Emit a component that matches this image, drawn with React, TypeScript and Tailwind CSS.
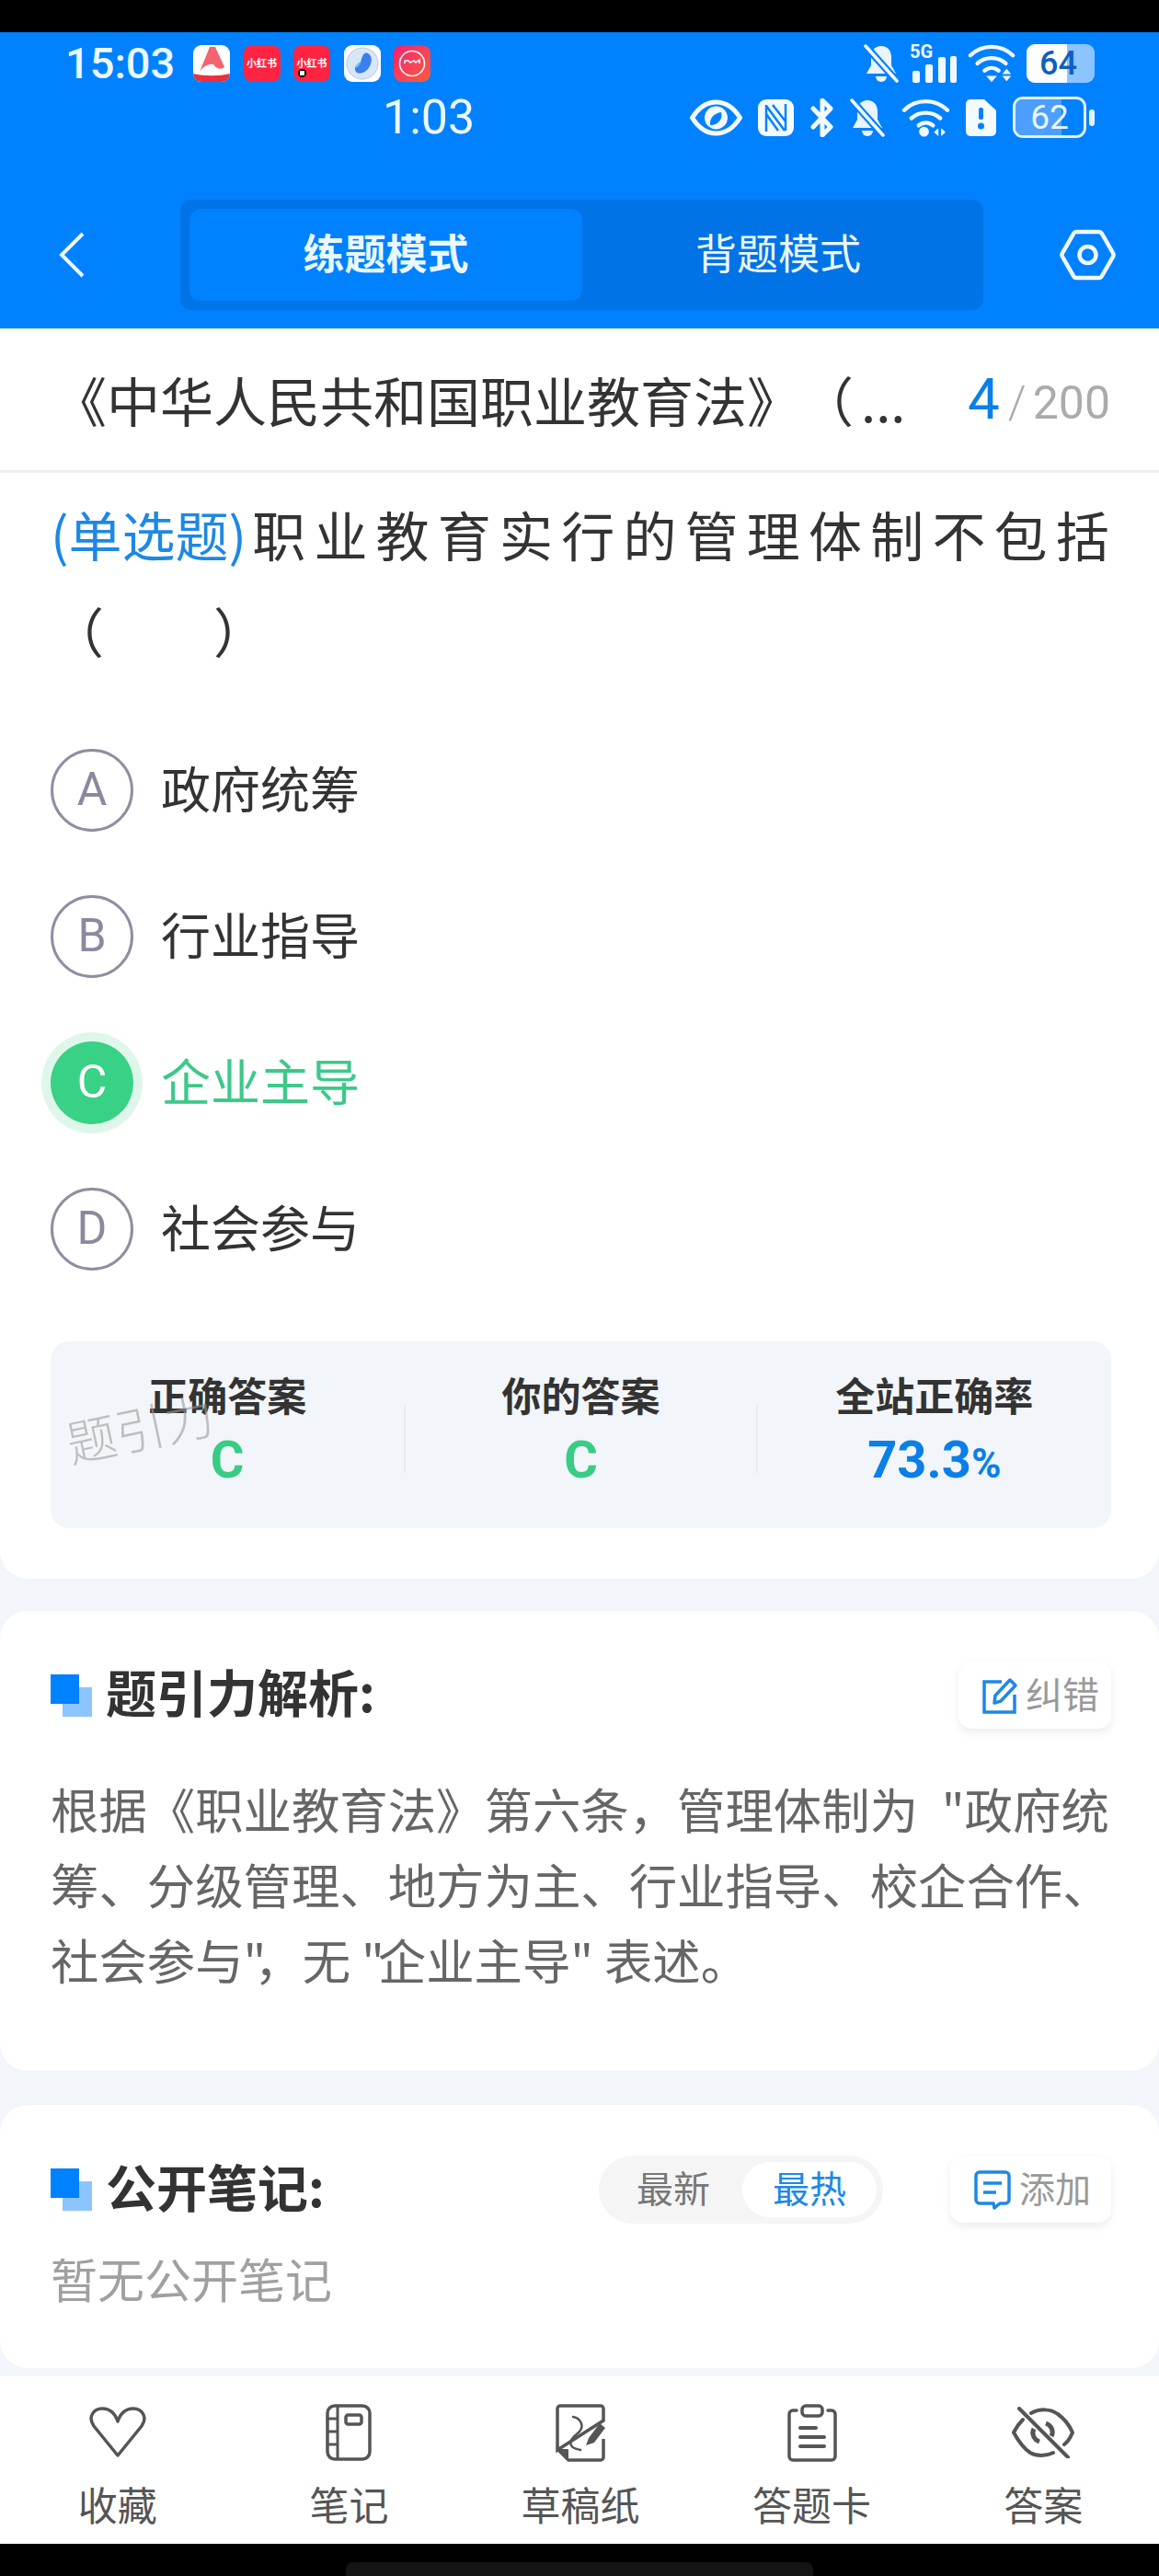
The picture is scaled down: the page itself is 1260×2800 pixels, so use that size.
import React from "react";

const CJK = "font-['Noto_Sans_CJK_SC','Noto_Sans',sans-serif]";
const NUM = "font-['Roboto','Noto_Sans_CJK_SC',sans-serif]";

function Bell() {
  return (
    <svg viewBox="0 0 38 42" className="w-[38px] h-[42px]">
      <path d="M19 2c-7 0-11 5-11 12v9L3 32h32l-5-9v-9C30 7 26 2 19 2z" fill="#EAF4FF" />
      <path d="M13 35a6 6 0 0 0 12 0z" fill="#EAF4FF" />
      <path d="M2 2l34 38" stroke="#0081FF" strokeWidth="8" />
      <path d="M2 2l34 38" stroke="#F4FAFF" strokeWidth="3.5" strokeLinecap="round" />
    </svg>
  );
}

function Wifi({ w, h, small }: { w: number; h: number; small: "updown" | "lr" }) {
  return (
    <svg viewBox="0 0 54 43" style={{ width: w, height: h }}>
      <g fill="none" stroke="#F0F9FF" strokeWidth="4.5" strokeLinecap="round">
        <path d="M3 13C16 0 38 0 51 13" />
        <path d="M11 22c9-8 23-8 32 0" />
        <path d="M19 30c5-4 11-4 16 0" />
      </g>
      {small === "updown" ? (
        <g fill="#F0F9FF">
          <path d="M21 36h12l-6 7z" />
          <path d="M44 28l5 6H39z" />
          <path d="M39 36h10l-5 6z" />
        </g>
      ) : (
        <g fill="#F0F9FF">
          <circle cx="25" cy="37" r="5.5" />
          <path d="M41 33v9l-5-4.500z" />
          <path d="M44 33v9l5-4.500z" />
        </g>
      )}
    </svg>
  );
}

function Hex() {
  return (
    <svg viewBox="0 0 61 56" className="w-[61px] h-[56px]">
      <path d="M18 3h25a3 3 0 0 1 2.600 1.500L58 26a4 4 0 0 1 0 4L45.600 51.500A3 3 0 0 1 43 53H18a3 3 0 0 1-2.600-1.500L3 30a4 4 0 0 1 0-4L15.400 4.500A3 3 0 0 1 18 3z" fill="none" stroke="#F0F9FF" strokeWidth="4.500" />
      <circle cx="30.500" cy="28" r="9" fill="none" stroke="#F0F9FF" strokeWidth="4.500" />
    </svg>
  );
}

function Squares() {
  return (
    <div className="relative w-[45px] h-[46px] shrink-0">
      <div className="absolute left-[13px] top-[14px] w-[32px] h-[32px] bg-[#8CC4FF]" />
      <div className="absolute left-0 top-0 w-[31px] h-[32px] bg-[#0081FF]" />
    </div>
  );
}

function Option({ letter, text, active }: { letter: string; text: string; active?: boolean }) {
  return (
    <div className="h-[159px] flex items-center">
      <div
        className={
          active
            ? "w-[90px] h-[90px] rounded-full bg-[#39D185] shadow-[0_0_0_10px_#DFF7EA] flex items-center justify-center text-white text-[50px] font-['Roboto']"
            : "w-[90px] h-[90px] rounded-full border-[3px] border-[#8E8EA0] flex items-center justify-center text-[#8A8A9E] text-[50px] font-['Roboto']"
        }
      >
        {letter}
      </div>
      <div className={active ? "ml-[30px] pb-[6px] text-[54px] leading-none text-[#3CC98A]" : "ml-[30px] pb-[6px] text-[54px] leading-none text-[#333]"}>{text}</div>
    </div>
  );
}

function Stat({ label, children }: { label: string; children: React.ReactNode }) {
  return (
    <div className="flex flex-col items-center pt-[27px]">
      <div className="text-[43px] leading-[60px] font-bold text-[#333]">{label}</div>
      {children}
    </div>
  );
}

function NavItem({ icon, label }: { icon: React.ReactNode; label: string }) {
  return (
    <div className="flex flex-col items-center">
      <div className="h-[64px] flex items-center justify-center">{icon}</div>
      <div className="mt-[15px] text-[43px] leading-[60px] text-[#555]">{label}</div>
    </div>
  );
}

export default function App() {
  return (
    <div className={`w-[1260px] h-[2800px] bg-black flex flex-col overflow-hidden [text-spacing-trim:space-all] ${CJK}`}>
      <div className="h-[35px] shrink-0" />
      {/* header */}
      <div className="h-[322px] shrink-0 bg-[#0081FF] flex flex-col text-[#EAF8FF]">
        <div className="mt-[12px] h-[43px] flex items-center pl-[71px] pr-[70px]">
          <span className={`${NUM} text-[47px] leading-none font-medium w-[139px]`}>15:03</span>
          <div className="flex gap-[14.500px]">
            <div className="relative w-[40px] h-[40px] rounded-[9px] bg-white overflow-hidden">
              <svg viewBox="0 0 40 40" className="absolute inset-0">
                <path d="M18 2h6l10 22c-3 3-9 2-12-3-5-1-11 2-15 8z" fill="#F2646E" />
                <path d="M0 31c12 3 28 3 40 0v9H0z" fill="#EE2D3D" />
              </svg>
            </div>
            <div className="w-[40px] h-[40px] rounded-[9px] bg-[#FF2442] flex items-center justify-center text-white text-[11px] font-bold">小红书</div>
            <div className="relative w-[40px] h-[40px] rounded-[9px] bg-[#FF2442] flex items-center justify-center text-white text-[11px] font-bold">
              小红书
              <div className="absolute left-[5px] bottom-[5px] w-[9px] h-[9px] rounded-full bg-black border-[2px] border-black">
                <div className="w-full h-full bg-white" />
              </div>
            </div>
            <div className="w-[40px] h-[40px] rounded-[9px] bg-white flex items-center justify-center">
              <svg viewBox="0 0 40 40" className="w-[40px] h-[40px]">
                <circle cx="20" cy="20" r="17" fill="#D9E6F7" stroke="#B9C8DC" strokeWidth="1" />
                <path d="M26 9c6 3 4 12 0 17-5 6-13 6-14 1-1-4 4-5 6-9 2-5 3-11 8-9z" fill="#3C7FEF" />
                <path d="M12 24c2-4 5-5 7-8-1 5-3 9-7 8z" fill="#63C6F1" />
              </svg>
            </div>
            <div className="w-[40px] h-[40px] rounded-[9px] bg-gradient-to-br from-[#F5166E] to-[#FB5A38] flex items-center justify-center">
              <svg viewBox="0 0 40 40" className="w-[40px] h-[40px]">
                <circle cx="20" cy="20" r="13.500" fill="none" stroke="#fff" strokeWidth="1.600" />
                <path d="M12 20v-3h4l2 2 4-2 2 2 4-3v4" fill="none" stroke="#fff" strokeWidth="1.600" />
              </svg>
            </div>
          </div>
          <div className="ml-auto flex items-center">
            <Bell />
            <div className="relative w-[51px] h-[43px] ml-[12px]">
              <span className={`absolute left-0 -top-[2px] ${NUM} text-[20px] leading-[22px] font-bold text-[#F0F9FF]`}>5G</span>
              <svg viewBox="0 0 51 43" className="absolute inset-0">
                <rect x="3" y="30" width="8" height="13" rx="2" fill="#F0F9FF" />
                <rect x="17" y="23" width="8" height="20" rx="2" fill="#F0F9FF" />
                <rect x="31" y="15" width="8" height="28" rx="2" fill="#F0F9FF" />
                <rect x="44" y="14" width="7" height="29" rx="2" fill="#F0F9FF" />
              </svg>
            </div>
            <div className="ml-[12px]">
              <Wifi w={52} h={43} small="updown" />
            </div>
            <div className="ml-[12px] relative w-[74px] h-[42px] rounded-[9px] bg-[#8CC4FF] overflow-hidden">
              <div className="w-[44px] h-full bg-white" />
              <span className={`absolute left-[14px] top-0 ${NUM} text-[36px] leading-[42px] font-medium text-[#0D5FC0]`}>64</span>
            </div>
          </div>
        </div>
        <div className="mt-[15px] h-[45px] flex items-center pl-[416px] pr-[70px]">
          <span className={`${NUM} text-[52px] leading-none`}>1:03</span>
          <div className="ml-auto flex items-center">
            <svg viewBox="0 0 57 40" className="w-[57px] h-[40px]">
              <path d="M2.500 20C10 8 19 3 28.500 3S47 8 54.500 20C47 32 38 37 28.500 37S10 32 2.500 20z" fill="none" stroke="#F4FBFF" strokeWidth="5" />
              <circle cx="28.500" cy="20" r="12.500" fill="#F4FBFF" />
              <path d="M22 28c-1-7 4-13 12-14 2 6-2 14-12 14z" fill="#0081FF" />
            </svg>
            <svg viewBox="0 0 39 40" className="ml-[17px] w-[39px] h-[40px]">
              <rect width="39" height="40" rx="9" fill="#F4FBFF" />
              <path d="M9 35V6M9 7l20 27M30 34V5M16 6l14 18M9 16l13 18" stroke="#0081FF" strokeWidth="2.500" fill="none" />
            </svg>
            <svg viewBox="0 0 27 42" className="ml-[17px] w-[27px] h-[42px]">
              <path d="M4 11l19 20-9 9V2l9 9L4 31" fill="none" stroke="#F4FBFF" strokeWidth="5" strokeLinejoin="round" strokeLinecap="round" />
            </svg>
            <div className="ml-[17px]">
              <Bell />
            </div>
            <div className="ml-[17px]">
              <Wifi w={55} h={42} small="lr" />
            </div>
            <svg viewBox="0 0 33 40" className="ml-[16px] w-[33px] h-[40px]">
              <path d="M5 0h15l13 12v23a5 5 0 0 1-5 5H5a5 5 0 0 1-5-5V5a5 5 0 0 1 5-5z" fill="#F4FBFF" />
              <rect x="14" y="9" width="5" height="13" rx="2" fill="#0081FF" />
              <circle cx="16.500" cy="29" r="3.500" fill="#0081FF" />
            </svg>
            <div className="ml-[18px] flex items-center">
              <div className={`relative w-[80px] h-[45px] rounded-[11px] border-[3px] border-[#E4F2FF] overflow-hidden flex items-center justify-center ${NUM} text-[37px] leading-none text-[#EAF8FF]`}>
                <div className="absolute left-0 top-0 bottom-0 w-[50px] bg-[#4D9FFF]" />
                <span className="relative">62</span>
              </div>
              <div className="ml-[3px] w-[6px] h-[18px] rounded-[3px] bg-[#E4F2FF]" />
            </div>
          </div>
        </div>
        <div className="mt-[67px] h-[120px] flex items-center pl-[64px]">
          <svg viewBox="0 0 28 50" className="w-[28px] h-[50px]">
            <path d="M26 2L3 25l23 23" fill="none" stroke="#F0F9FF" strokeWidth="4" />
          </svg>
          <div className="ml-[104px] w-[873px] h-[120px] rounded-[12px] bg-[#0073E6] p-[10px] flex text-[45px] leading-none">
            <div className="w-[427px] rounded-[12px] bg-[#0081FF] flex items-center justify-center font-bold pb-[7px]">练题模式</div>
            <div className="flex-1 flex items-center justify-center pb-[7px]">背题模式</div>
          </div>
          <div className="ml-[83px]">
            <Hex />
          </div>
        </div>
      </div>
      {/* content */}
      <div className="flex-1 bg-[#F2F5F9] flex flex-col">
        <div className="bg-white rounded-b-[30px] flex flex-col">
          <div className="h-[157px] border-b-[3px] border-[#EEEEEE] flex items-center pl-[58px] pr-[53px]">
            <div className="text-[58px] leading-none text-[#333] whitespace-nowrap">
              《中华人民共和国职业教育法》（<span className="ml-[8px]">...</span>
            </div>
            <div className={`ml-auto flex items-baseline ${NUM}`}>
              <span className="text-[62px] leading-none text-[#0A7FE8]">4</span>
              <span className="ml-[9px] text-[50px] leading-none text-[#ABABAB] font-light">/</span>
              <span className="ml-[7px] text-[50px] leading-none text-[#ABABAB]">200</span>
            </div>
          </div>
          <div className="pl-[55px] pr-[52px] pb-[55px] pt-[14px] flex flex-col">
            <div className="text-[58px] leading-[105px] whitespace-nowrap text-[#333]">
              <span className="text-[#1E88E5] mr-[6px]">(单选题)</span>
              <span className="tracking-[9.200px]">职业教育实行的管理体制不包括</span>
            </div>
            <div className="text-[58px] leading-[105px] whitespace-nowrap text-[#333]">
              （<span className="inline-block w-[119px]" />）
            </div>
            <div className="mt-[41px] flex flex-col">
              <Option letter="A" text="政府统筹" />
              <Option letter="B" text="行业指导" />
              <Option letter="C" text="企业主导" active />
              <Option letter="D" text="社会参与" />
            </div>
            <div className="relative mt-[43px] h-[203px] rounded-[20px] bg-[#F2F5F9] grid grid-cols-3">
              <Stat label="正确答案">
                <span className={`${NUM} text-[56px] leading-[84px] font-bold text-[#38CC85]`}>C</span>
              </Stat>
              <div className="relative">
                <div className="absolute left-0 top-[69px] h-[74px] border-l-[2px] border-[#E8ECF0]" />
                <div className="absolute right-0 top-[69px] h-[74px] border-r-[2px] border-[#E8ECF0]" />
                <Stat label="你的答案">
                  <span className={`${NUM} text-[56px] leading-[84px] font-bold text-[#38CC85]`}>C</span>
                </Stat>
              </div>
              <Stat label="全站正确率">
                <span className={`${NUM} text-[56px] leading-[84px] font-bold text-[#0A7FE8]`}>
                  73.3<span className="text-[44px]">%</span>
                </span>
              </Stat>
              <div className="absolute left-[16px] top-[66px] text-[54px] leading-none font-light text-[#9A9A9A]/60 -rotate-[12deg] whitespace-nowrap">题引力</div>
            </div>
          </div>
        </div>

        <div className="mt-[35px] bg-white rounded-[30px] pl-[55px] pr-[52px] pt-[55px] pb-[81px]">
          <div className="h-[73px] flex items-center">
            <Squares />
            <div className="ml-[15px] pb-[10px] text-[55px] leading-none font-bold text-[#333]">题引力解析:</div>
            <div className="ml-auto w-[166px] h-[73px] rounded-[14px] bg-white shadow-[0_4px_10px_rgba(0,0,0,0.08)] flex items-center pl-[25px]">
              <svg viewBox="0 0 40 42" className="w-[40px] h-[42px]">
                <path d="M22 6H3v33h33V20" fill="none" stroke="#1E88E5" strokeWidth="3.500" />
                <path d="M14 29l1-8L31 4l6 6-16 17z" fill="none" stroke="#1E88E5" strokeWidth="3.500" strokeLinejoin="round" />
              </svg>
              <span className="ml-[8px] pb-[6px] text-[40px] leading-none text-[#999]">纠错</span>
            </div>
          </div>
          <p className="mt-[45px] text-[52.400px] leading-[82px] text-[#666]">
            根据《职业教育法》第六条，管理体制为 <span className="ml-[14px]">"政府统</span>筹、分级管理、地方为主、行业指导、校企合作、社会参与<span className="-mr-[13px]">"</span>，无 <span className="-mr-[7px]">"</span>企业主导" 表述。
          </p>
        </div>

        <div className="mt-[37px] bg-white rounded-[30px] pl-[55px] pr-[52px] pt-[55px] pb-[63px]">
          <div className="h-[74px] flex items-center">
            <Squares />
            <div className="ml-[15px] pb-[10px] text-[55px] leading-none font-bold text-[#333]">公开笔记:</div>
            <div className="ml-auto w-[309px] h-[74px] rounded-full bg-[#F5F5F5] flex items-center pl-[41px] pr-[7px] text-[40px] leading-none">
              <span className="text-[#777] pb-[6px]">最新</span>
              <div className="ml-auto w-[146px] h-[60px] rounded-full bg-white flex items-center justify-center text-[#1E88E5] pb-[6px]">最热</div>
            </div>
            <div className="ml-[73px] w-[175px] h-[72px] rounded-[14px] bg-white shadow-[0_4px_10px_rgba(0,0,0,0.08)] flex items-center pl-[25px]">
              <svg viewBox="0 0 42 44" className="w-[42px] h-[44px]">
                <path d="M7 3h28a4 4 0 0 1 4 4v26a4 4 0 0 1-4 4h-6l-6 5-1-5H7a4 4 0 0 1-4-4V7a4 4 0 0 1 4-4z" fill="none" stroke="#1E88E5" strokeWidth="3.500" strokeLinejoin="round" />
                <path d="M11 15h20M11 25h14" stroke="#1E88E5" strokeWidth="3.500" />
              </svg>
              <span className="ml-[8px] pb-[6px] text-[39px] leading-none text-[#999]">添加</span>
            </div>
          </div>
          <div className="mt-[24px] text-[51px] leading-[70px] text-[#A0A0A0]">暂无公开笔记</div>
        </div>

        <div className="mt-[9px] h-[182px] shrink-0 bg-white pt-[29px] pl-[2px] grid grid-cols-5">
          <NavItem
            label="收藏"
            icon={
              <svg viewBox="0 0 64 56" className="w-[64px] h-[56px]">
                <path d="M32 53L6 21C-1 11 6 2 15 2c8 0 14 5 17 14C35 7 41 2 49 2c9 0 16 9 9 19z" fill="none" stroke="#555" strokeWidth="3.500" strokeLinejoin="round" />
              </svg>
            }
          />
          <NavItem
            label="笔记"
            icon={
              <svg viewBox="0 0 50 62" className="w-[50px] h-[62px]">
                <rect x="2" y="2" width="46" height="58" rx="8" fill="none" stroke="#555" strokeWidth="3.500" />
                <path d="M13 2v58M2 16h11M2 30h11M2 44h11" stroke="#555" strokeWidth="3" />
                <rect x="22" y="12" width="17" height="10" rx="2.500" fill="none" stroke="#555" strokeWidth="3.500" />
              </svg>
            }
          />
          <NavItem
            label="草稿纸"
            icon={
              <svg viewBox="0 0 54 63" className="w-[54px] h-[63px]">
                <path d="M13 61H49a3 3 0 0 0 3-3V38M52 18V5a3 3 0 0 0-3-3H5a3 3 0 0 0-3 3v45z" fill="none" stroke="#555" strokeWidth="3.500" />
                <path d="M2 50h11v11z" fill="#555" stroke="#555" strokeWidth="2" strokeLinejoin="round" />
                <path d="M19 14c9 2 12 10 7 16-5 5-12 9-9 15 2 4 7 4 10 5" fill="none" stroke="#555" strokeWidth="2.500" strokeLinecap="round" />
                <path d="M33 45l3-8 12-16 6 5-12 16z" fill="#555" />
              </svg>
            }
          />
          <NavItem
            label="答题卡"
            icon={
              <svg viewBox="0 0 54 63" className="w-[54px] h-[63px]">
                <path d="M10 7H6a4 4 0 0 0-4 4v46a4 4 0 0 0 4 4h42a4 4 0 0 0 4-4V11a4 4 0 0 0-4-4h-4" fill="none" stroke="#555" strokeWidth="3.500" strokeLinecap="round" />
                <rect x="16" y="2" width="22" height="11" rx="4" fill="none" stroke="#555" strokeWidth="3.500" />
                <path d="M14 26h17M14 36h26M14 46h26" stroke="#555" strokeWidth="4" strokeLinecap="round" />
              </svg>
            }
          />
          <NavItem
            label="答案"
            icon={
              <svg viewBox="0 0 68 56" className="w-[68px] h-[56px]">
                <path d="M21 7c9-5 21-5 29 1 7 5 12 11 16 20-2 5-5 10-9 13M45 50c-8 4-18 4-25 0-8-5-13-13-18-22 3-6 6-10 10-14" fill="none" stroke="#555" strokeWidth="4" strokeLinecap="round" />
                <path d="M8 2l53 53" stroke="#555" strokeWidth="4" strokeLinecap="round" />
                <path d="M37 18c6 2 9 9 6 14M30 38c-6-2-9-9-6-14" fill="none" stroke="#555" strokeWidth="5" />
              </svg>
            }
          />
        </div>

        <div className="flex-1 bg-black flex items-end justify-center">
          <div className="w-[508px] h-[15px] rounded-t-[8px] bg-[#141414]" />
        </div>
      </div>
    </div>
  );
}
